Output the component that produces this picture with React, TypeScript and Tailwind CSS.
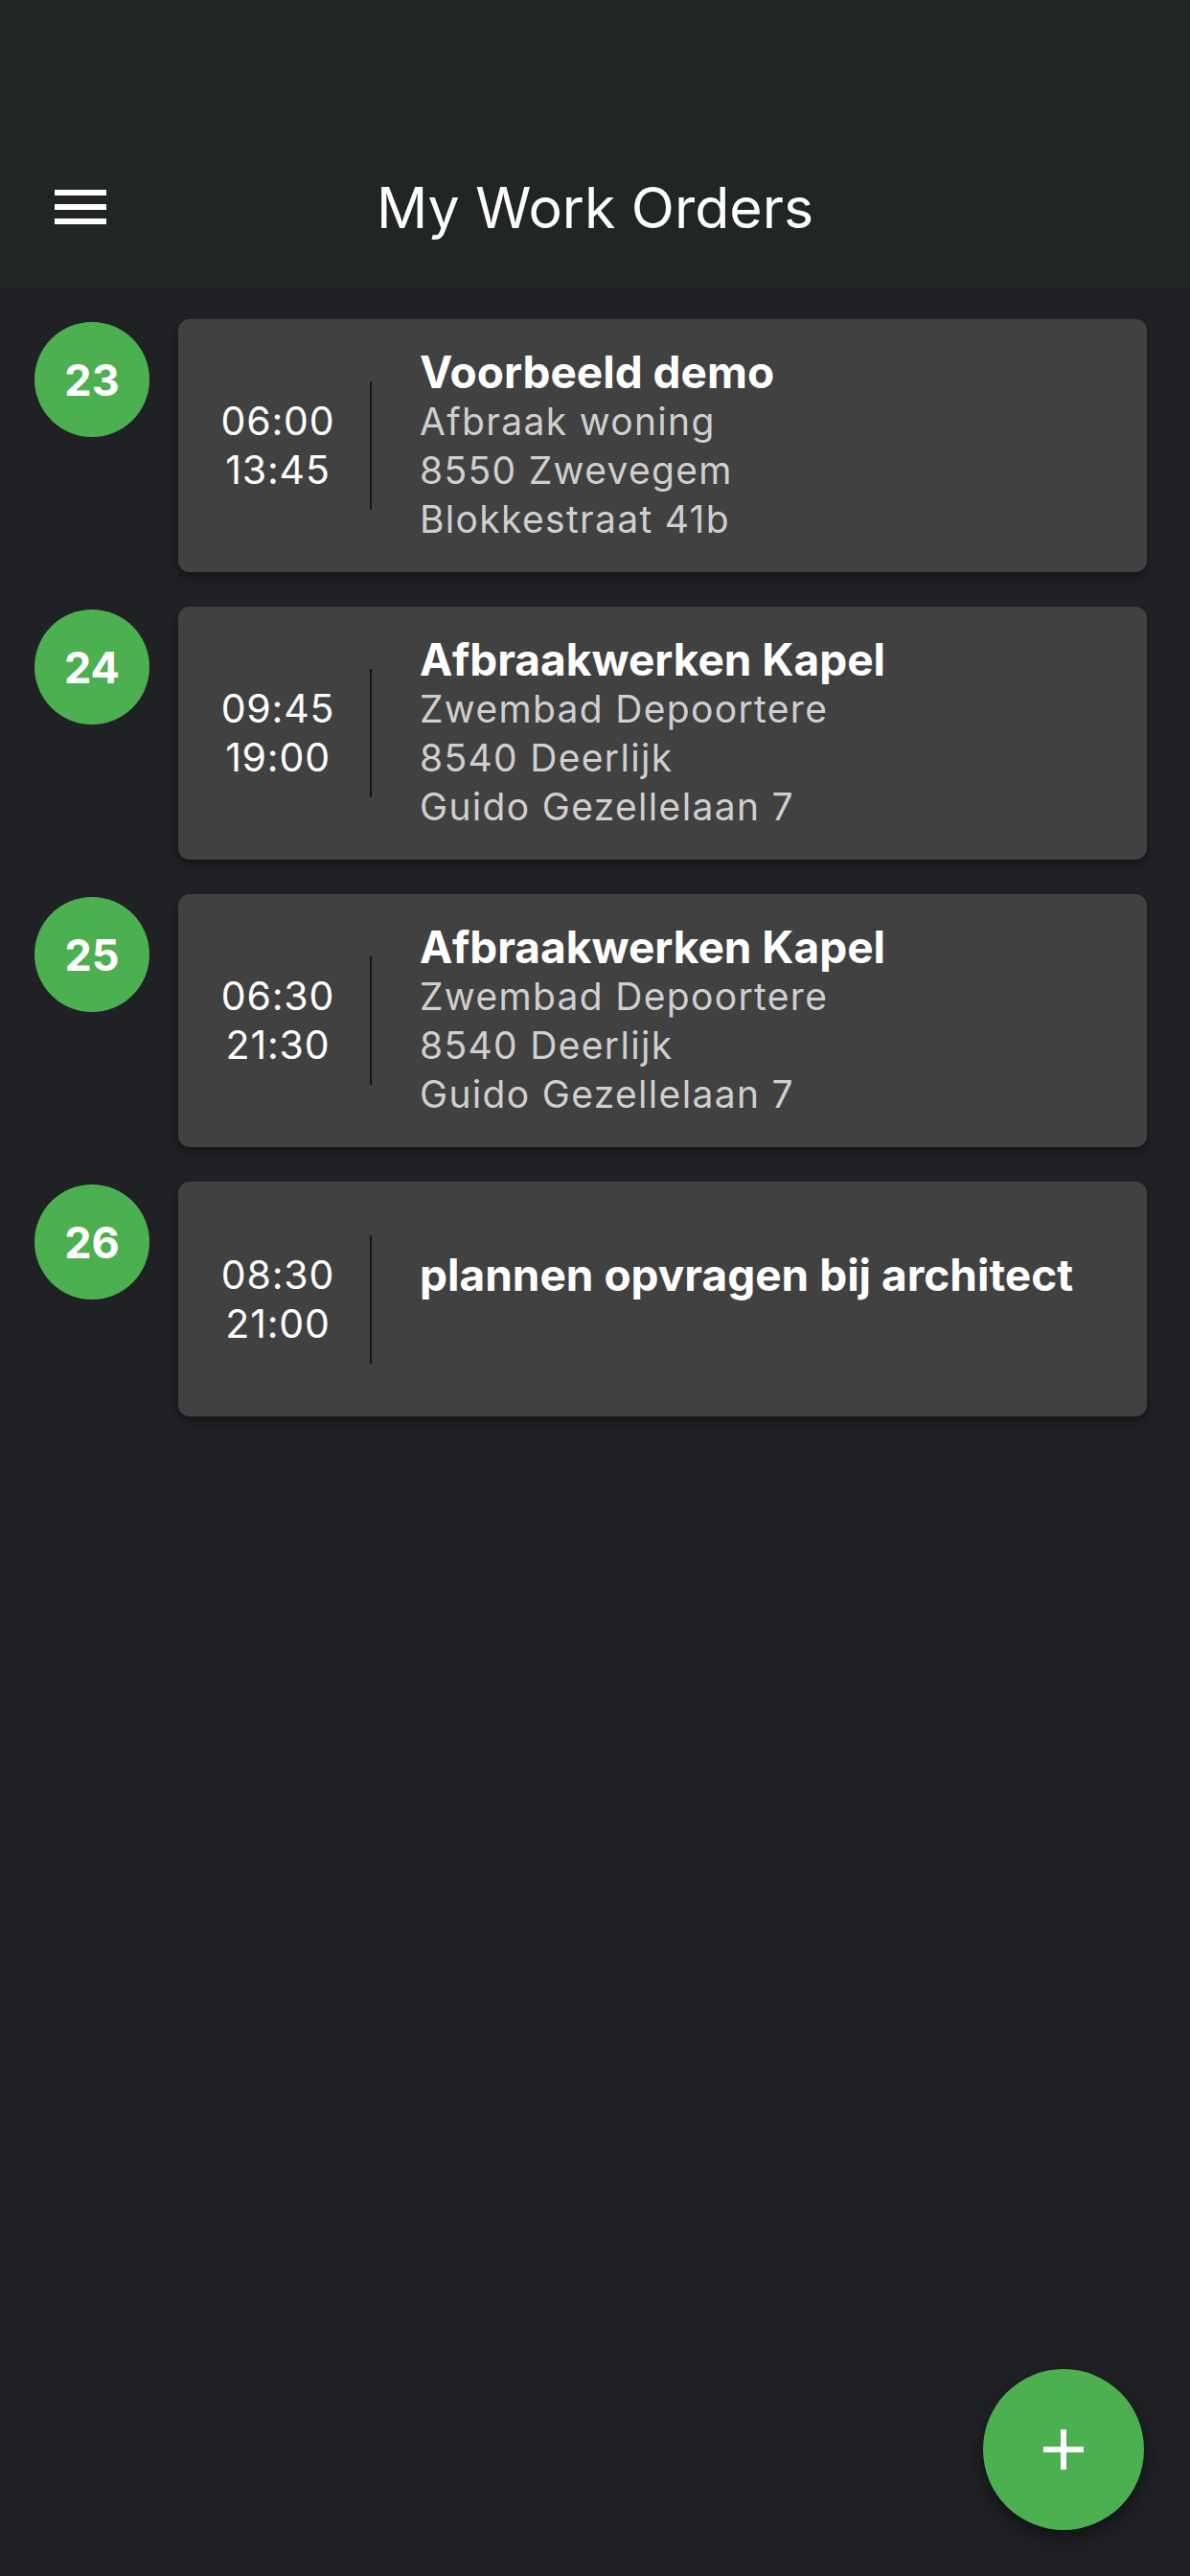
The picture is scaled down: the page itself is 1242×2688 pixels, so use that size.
import { Plus } from "lucide-react";

type Order = {
  id: number;
  start: string;
  end: string;
  title: string;
  lines: string[];
};

const orders: Order[] = [
  {
    id: 23,
    start: "06:00",
    end: "13:45",
    title: "Voorbeeld demo",
    lines: ["Afbraak woning", "8550 Zwevegem", "Blokkestraat 41b"],
  },
  {
    id: 24,
    start: "09:45",
    end: "19:00",
    title: "Afbraakwerken Kapel",
    lines: ["Zwembad Depoortere", "8540 Deerlijk", "Guido Gezellelaan 7"],
  },
  {
    id: 25,
    start: "06:30",
    end: "21:30",
    title: "Afbraakwerken Kapel",
    lines: ["Zwembad Depoortere", "8540 Deerlijk", "Guido Gezellelaan 7"],
  },
  {
    id: 26,
    start: "08:30",
    end: "21:00",
    title: "plannen opvragen bij architect",
    lines: [],
  },
];

const OrderRow = ({ order }: { order: Order }) => {
  const empty = order.lines.length === 0;
  return (
    <div className="flex items-start gap-[30px]">
      <div className="mt-[3px] w-[120px] h-[120px] rounded-full bg-[#4caf50] flex items-center justify-center shrink-0">
        <span className="text-[45px] font-bold text-white leading-none">{order.id}</span>
      </div>
      <div
        className={`flex-1 flex items-center bg-[#414141] rounded-[12px] py-[30px] shadow-[0_6px_10px_rgba(0,0,0,0.35)] ${
          empty ? "min-h-[245px]" : ""
        }`}
      >
        <div className="w-[202px] pl-[8px] shrink-0 border-r-2 border-[#151515] py-[16px] text-center text-white text-[41px] tracking-[0.02em] leading-[51px]">
          <div>{order.start}</div>
          <div>{order.end}</div>
        </div>
        <div className="pl-[50px] flex flex-col">
          <div className="text-[46px] font-bold text-white leading-[51px]">{order.title}</div>
          {order.lines.map((l, i) => (
            <div key={i} className="text-[39px] tracking-[0.034em] text-[#cfcfcf] leading-[51px]">
              {l}
            </div>
          ))}
          {empty && <div className="h-[51px]" />}
        </div>
      </div>
    </div>
  );
};

export default function App() {
  return (
    <div className="relative min-h-screen bg-[#202125] font-['Inter','Noto_Sans',sans-serif]">
      <div className="bg-[#212526] pt-[132px]">
        <div className="relative h-[168px] flex items-center justify-center">
          <div className="absolute left-[57px] top-[66px] w-[54px] flex flex-col gap-[9px]">
            <div className="h-[6px] bg-white" />
            <div className="h-[6px] bg-white" />
            <div className="h-[6px] bg-white" />
          </div>
          <div className="text-white text-[59px] leading-none">My Work Orders</div>
        </div>
      </div>

      <div className="flex flex-col gap-[36px] pt-[33px] pl-[36px] pr-[45px]">
        {orders.map((o) => (
          <OrderRow key={o.id} order={o} />
        ))}
      </div>

      <button className="fixed right-[48px] bottom-[48px] w-[168px] h-[168px] rounded-full bg-[#4caf50] flex items-center justify-center shadow-[0_8px_20px_rgba(0,0,0,0.45)]">
        <Plus className="w-[72px] h-[72px] text-white" strokeWidth={2} strokeLinecap="butt" />
      </button>
    </div>
  );
}
